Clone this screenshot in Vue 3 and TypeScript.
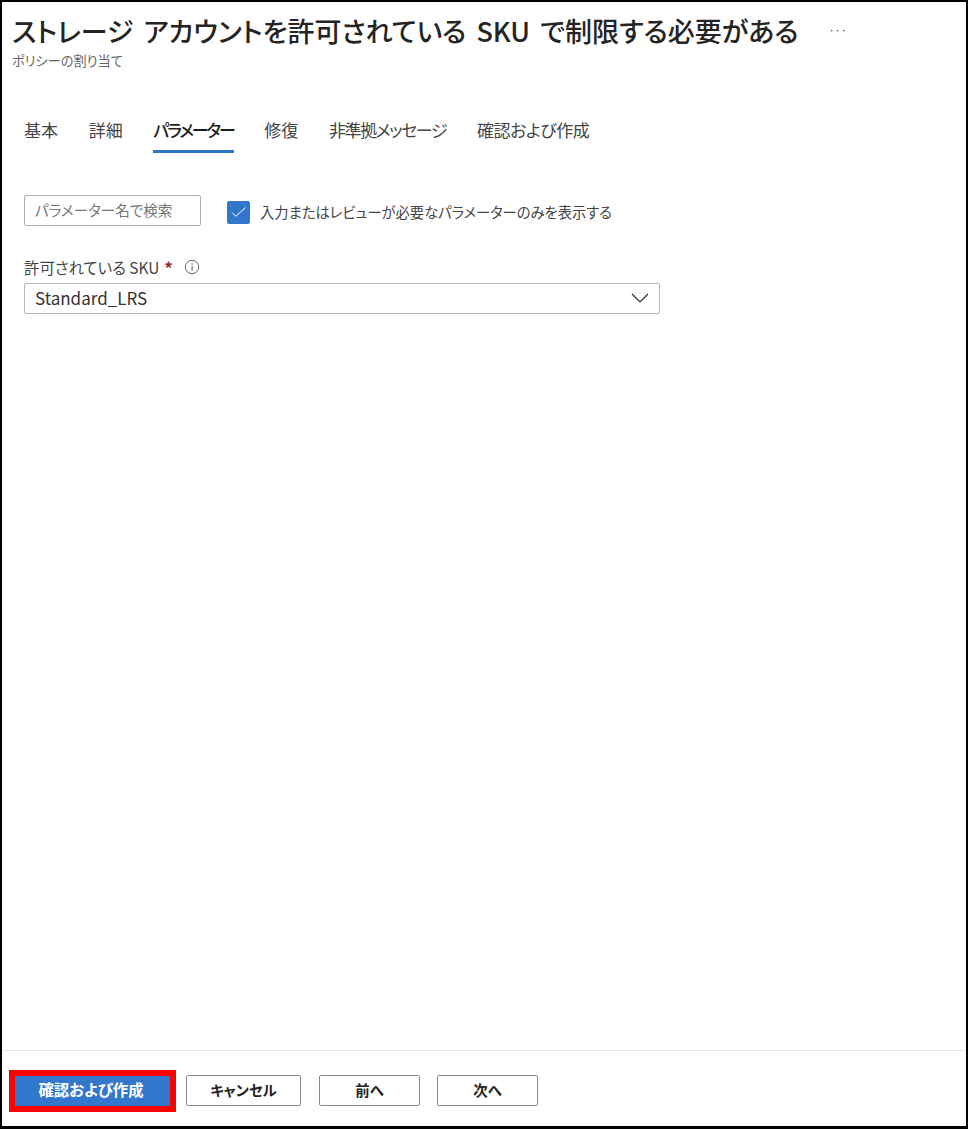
<script setup lang="ts">
import { ref } from 'vue'

interface Tab {
  label: string
  spacing?: 'narrow' | 'tight'
}

const tabs: Tab[] = [
  { label: '基本' },
  { label: '詳細' },
  { label: 'パラメーター' },
  { label: '修復' },
  { label: '非準拠メッセージ', spacing: 'narrow' },
  { label: '確認および作成', spacing: 'tight' },
]
const activeTab = ref('パラメーター')
const onlyRequired = ref(true)
</script>

<template>
  <div class="page">
    <header class="head">
      <div class="title-row">
        <h1 class="title">ストレージ アカウントを許可されている SKU で制限する必要がある</h1>
        <svg class="more" viewBox="0 0 14 2" width="14" height="2">
          <rect x="0" y="0" width="1.4" height="1.4" fill="#555" />
          <rect x="6" y="0" width="1.4" height="1.4" fill="#555" />
          <rect x="12" y="0" width="1.4" height="1.4" fill="#555" />
        </svg>
      </div>
      <div class="sub">ポリシーの割り当て</div>
    </header>

    <nav class="tabs">
      <button
        v-for="t in tabs"
        :key="t.label"
        type="button"
        class="tab"
        :class="[{ 'tab--active': t.label === activeTab }, t.spacing ? `tab--${t.spacing}` : '']"
        @click="activeTab = t.label"
      >
        {{ t.label }}
      </button>
    </nav>

    <main class="body">
      <div class="filter-row">
        <div class="search">パラメーター名で検索</div>
        <label class="check">
          <span class="check-box" :class="{ 'check-box--on': onlyRequired }" @click="onlyRequired = !onlyRequired">
            <svg v-if="onlyRequired" viewBox="0 0 16 16" width="16" height="16">
              <path d="M1 8.5l3.8 3.8 9.7-8.8" stroke="#fff" stroke-width="1" fill="none" />
            </svg>
          </span>
          <span class="check-label">入力またはレビューが必要なパラメーターのみを表示する</span>
        </label>
      </div>

      <div class="field">
        <div class="field-label">
          <span>許可されている SKU</span>
          <span class="req">*</span>
          <svg class="info" viewBox="0 0 16 16" width="16" height="16">
            <circle cx="8" cy="8" r="6.7" stroke="#666" stroke-width="1" fill="none" />
            <rect x="7.5" y="7" width="1.2" height="4.6" fill="#666" />
            <rect x="7.5" y="4.4" width="1.2" height="1.3" fill="#666" />
          </svg>
        </div>
        <div class="select">
          <span>Standard_LRS</span>
          <svg viewBox="0 0 18 10" width="18" height="10">
            <path d="M1 1l8 8 8-8" stroke="#333" stroke-width="1.2" fill="none" />
          </svg>
        </div>
      </div>
    </main>

    <footer class="foot">
      <div class="primary-ring">
        <button type="button" class="btn btn--primary">確認および作成</button>
      </div>
      <button type="button" class="btn btn--cancel">キャンセル</button>
      <button type="button" class="btn btn--nav">前へ</button>
      <button type="button" class="btn btn--nav">次へ</button>
    </footer>
  </div>
</template>

<style>
html,
body {
  margin: 0;
  background: #fff;
}
</style>

<style scoped>
.page {
  box-sizing: border-box;
  width: 968px;
  height: 1129px;
  display: flex;
  flex-direction: column;
  border: 2px solid #000;
  border-bottom-width: 3px;
  background: #fff;
  font-family: 'Noto Sans CJK JP', 'Noto Sans', sans-serif;
  font-feature-settings: 'palt';
  color: #323130;
}

.head {
  padding: 10px 0 0 10px;
}

.title-row {
  display: flex;
  align-items: center;
  height: 38px;
}

.title {
  margin: 0;
  font-size: 27px;
  line-height: 38px;
  font-weight: 500;
  word-spacing: 4px;
  color: #252423;
  white-space: nowrap;
}

.more {
  margin-left: 32px;
}

.sub {
  margin-top: 1px;
  font-size: 13.2px;
  line-height: 20px;
  color: #666;
}

.tabs {
  display: flex;
  gap: 30.7px;
  margin-top: 46px;
  padding-left: 22px;
}

.tab {
  padding: 0 0 7px;
  border: 0;
  border-bottom: 3px solid transparent;
  background: none;
  font: inherit;
  font-feature-settings: inherit;
  font-size: 17px;
  line-height: 26px;
  color: #444;
  cursor: pointer;
}

.tab--narrow {
  letter-spacing: -1.4px;
}

.tab--tight {
  letter-spacing: -0.45px;
}

.tab--active {
  border-bottom-color: #2f74c8;
  font-weight: 500;
  letter-spacing: -2.2px;
  color: #1f1f1f;
}

.body {
  flex: 1;
  padding: 42px 0 0 22px;
}

.filter-row {
  display: flex;
  align-items: center;
  gap: 26px;
}

.search {
  box-sizing: border-box;
  width: 177px;
  height: 31px;
  padding-left: 10px;
  border: 1px solid #b0b0b0;
  border-radius: 2px;
  font-size: 14.6px;
  line-height: 28px;
  color: #767676;
}

.check {
  display: flex;
  align-items: center;
  gap: 10px;
  margin-top: 3px;
  font-size: 14.3px;
  color: #444;
}

.check-label {
  padding-bottom: 2px;
}

.check-box {
  box-sizing: border-box;
  width: 23px;
  height: 23px;
  display: flex;
  align-items: center;
  justify-content: center;
  border: 1px solid #aaa;
  border-radius: 2px;
  cursor: pointer;
}

.check-box--on {
  border-color: #3277cc;
  background: #3277cc;
}

.field {
  width: 636px;
  margin-top: 25px;
}

.field-label {
  display: flex;
  align-items: center;
  height: 32px;
  font-size: 15.4px;
  color: #444;
}

.req {
  margin-left: 5px;
  font-size: 17px;
  font-weight: 700;
  color: #a4262c;
}

.info {
  margin-left: 11px;
}

.select {
  box-sizing: border-box;
  height: 31px;
  display: flex;
  align-items: center;
  justify-content: space-between;
  padding: 0 10px 2px;
  border: 1px solid #b5b5b5;
  border-radius: 2px;
  font-size: 17px;
  color: #333;
}

.foot {
  height: 56px;
  display: flex;
  align-items: flex-start;
  padding: 19px 0 0 7px;
  border-top: 1px solid #e6e6e6;
}

.primary-ring {
  display: flex;
  margin-right: 10px;
  padding: 6px;
  background: #f00;
}

.btn {
  box-sizing: border-box;
  height: 31px;
  margin-top: 5px;
  padding: 0 0 2px;
  border: 1px solid #8a8a8a;
  border-radius: 2px;
  background: #fff;
  font: inherit;
  font-feature-settings: inherit;
  font-size: 14.4px;
  font-weight: 700;
  color: #252423;
  cursor: pointer;
}

.btn--primary {
  width: 155px;
  height: 30px;
  margin-top: 0;
  padding-bottom: 4px;
  padding-right: 3px;
  border-color: #3277cc;
  border-radius: 0;
  background: #3277cc;
  font-size: 15.4px;
  color: #fff;
}

.btn--cancel {
  width: 115px;
  margin-right: 18px;
}

.btn--nav {
  width: 101px;
  margin-right: 17px;
}
</style>
